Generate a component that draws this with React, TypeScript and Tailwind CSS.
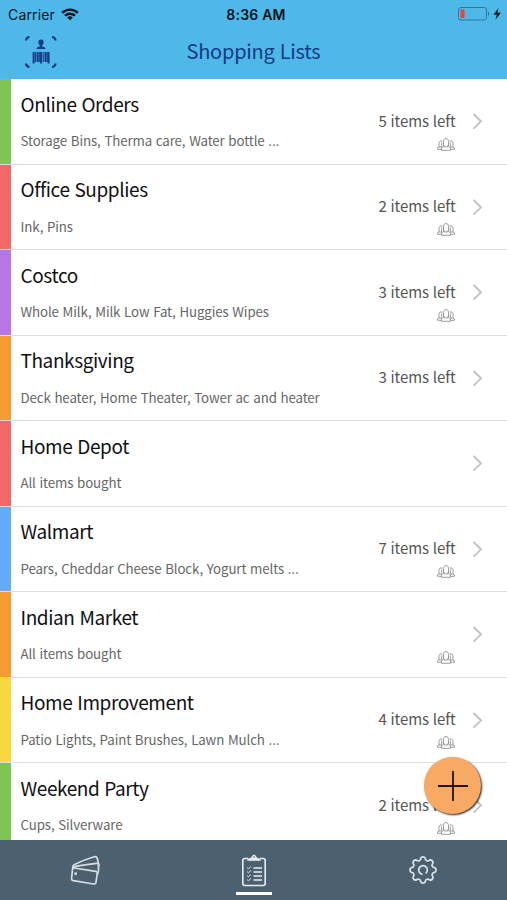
type ShoppingList = {
  name: string;
  summary: string;
  color: string;
  left?: number;
  shared?: boolean;
};

const lists: ShoppingList[] = [
  { name: "Online Orders", summary: "Storage Bins, Therma care, Water bottle ...", color: "bg-[#7dc653]", left: 5, shared: true },
  { name: "Office Supplies", summary: "Ink, Pins", color: "bg-[#ef6a67]", left: 2, shared: true },
  { name: "Costco", summary: "Whole Milk, Milk Low Fat, Huggies Wipes", color: "bg-[#b775e8]", left: 3, shared: true },
  { name: "Thanksgiving", summary: "Deck heater, Home Theater, Tower ac and heater", color: "bg-[#f59b31]", left: 3 },
  { name: "Home Depot", summary: "All items bought", color: "bg-[#ef6a67]" },
  { name: "Walmart", summary: "Pears, Cheddar Cheese Block, Yogurt melts ...", color: "bg-[#63aaf8]", left: 7, shared: true },
  { name: "Indian Market", summary: "All items bought", color: "bg-[#f59b31]", shared: true },
  { name: "Home Improvement", summary: "Patio Lights, Paint Brushes, Lawn Mulch ...", color: "bg-[#f6d93c]", left: 4, shared: true },
  { name: "Weekend Party", summary: "Cups, Silverware", color: "bg-[#7dc653]", left: 2, shared: true },
];

function WifiIcon() {
  return (
    <svg width="18" height="13" viewBox="0 0 18 13" fill="none" stroke="#06131b" strokeWidth="2.3">
      <path d="M1.2 4.9a11 11 0 0 1 15.6 0M4 7.8a7.1 7.1 0 0 1 10 0" />
      <path d="M9 12.3 6.2 9.5a4 4 0 0 1 5.6 0Z" fill="#06131b" stroke="none" />
    </svg>
  );
}

function BatteryIcon() {
  return (
    <svg width="44" height="14" viewBox="0 0 44 14" fill="none">
      <rect x="0.5" y="0.5" width="28" height="12.5" rx="2.5" stroke="#2d7796" />
      <rect x="2.5" y="2.5" width="4" height="8.5" rx="0.5" fill="#ee3f3c" />
      <path d="M30 4.5V9c1.5-.6 1.5-3.9 0-4.5Z" fill="#2d7796" />
      <path d="M40.5 1 35.5 7.8h3.3l-1.4 5 5.5-7h-3.5Z" fill="#06131b" />
    </svg>
  );
}

function ScanIcon() {
  return (
    <svg width="32" height="32" viewBox="0 0 32 32" fill="none" stroke="#143a85">
      <path d="M1 4.5C1.2 2.5 2.5 1.2 4.5 1M27 1c2 .2 3.3 1.5 3.5 3.5M30.5 27.5c-.2 2-1.5 3.300-3.500 3.500M4.500 31c-2-.2-3.300-1.500-3.500-3.500" strokeWidth="2.2" />
      <path d="M16 3.500c-2 0-2.800 1.300-2.600 3 .1 1.300.6 2.200 1.400 2.800v1.200c-1.800.5-3.300.8-3.300 2.500h9c0-1.700-1.500-2-3.300-2.500V9.300c.8-.6 1.300-1.500 1.400-2.800.2-1.700-.6-3-2.600-3Z" fill="#143a85" stroke="none" />
      <path d="M8.600 16v11.500M12.600 16v10M16 16v11.500M20.500 16v10M23.600 16v11.500" strokeWidth="1.9" />
      <path d="M10.500 16v10M14.300 16v10M18.200 16v10M22.200 16v10" strokeWidth="1.1" />
    </svg>
  );
}

function PeopleIcon() {
  return (
    <svg width="18" height="13" viewBox="0 0 18 13" fill="none" stroke="#919191" strokeWidth="0.9">
      <path d="M6.500 8.500V3.500C6.500 1.600 7.500.6 9 .6s2.500 1 2.500 2.900v5L13.500 10v2.300h-9V10Z" />
      <path d="M5.500 3.200C3.500 2.300 2 3.400 2 5.200V9L.5 9.800v1.500h4M12.500 3.200c2-.9 3.500.2 3.500 2V9l1.500.8v1.500h-4M4.700 4.500v5M13.300 4.500v5M2 9h2.500M13.500 9H16M7.500 7.500v1.500h3V7.500" />
    </svg>
  );
}

function CardsIcon() {
  return (
    <svg width="31" height="31" viewBox="0 0 31 31" fill="none" stroke="#d5dee5" strokeWidth="1.7" strokeLinejoin="round">
      <path d="M5.200 13 26.700 16.300a1.800 1.800 0 0 1 1.600 2L27 27.300a2 2 0 0 1-2.300 1.700L4.300 25.700a2 2 0 0 1-1.700-2.300L3.500 14.300a1.600 1.600 0 0 1 1.700-1.300Z" />
      <path d="M3.700 14V12c0-1.300.6-2 1.800-2.600C12 6.300 18 3.900 25.300 1.800c1.600-.4 2.500.2 2.900 1.500L29.700 9.500l-.5 2" />
      <path d="M4.300 13c.3-1 .9-1.500 2-1.700C14 10.200 20 9.300 27.500 8.300c1.400-.1 2.200.6 2.200 1.800L29.300 17l-1.200 3" />
      <circle cx="6.6" cy="18.8" r="0.6" />
    </svg>
  );
}

function ClipboardIcon() {
  return (
    <svg width="26" height="33" viewBox="0 0 26 33" fill="none" stroke="#e8eff4" strokeWidth="1.6">
      <path d="M7 4.500H3.800a2 2 0 0 0-2 2v23a2 2 0 0 0 2 2h18.400a2 2 0 0 0 2-2v-23a2 2 0 0 0-2-2H19" />
      <path d="M6.500 6.500c0-1 .8-1.800 2.500-2.200 1.200-.3 1.600-.6 2-1.500C11.500 1.500 12 1 13 1s1.500.5 2 1.800c.4.900.8 1.200 2 1.500 1.700.4 2.500 1.200 2.500 2.200Z" fill="#e8eff4" strokeWidth="0.6" />
      <circle cx="13" cy="3" r="0.8" fill="#4d6070" stroke="none" />
      <path d="M12.500 14H21M12.500 18H21M12.500 22H21M12.500 26H21" strokeWidth="1.7" />
      <path d="m6 13.500 1.400 1.300L10 12.500M6 17.500l1.400 1.300 2.600-2.300M6 21.500l1.400 1.300 2.600-2.300M6 25.500l1.400 1.300 2.600-2.300" strokeWidth="0.9" />
    </svg>
  );
}

function GearIcon() {
  return (
    <svg width="30" height="30" viewBox="0 0 30 30" fill="none" stroke="#d5dee5" strokeWidth="1.8" strokeLinejoin="round">
      <path d="M26.570 12.700A2.500 2.500 0 0 1 26.570 17.300A2.500 2.500 0 0 0 24.810 21.560A2.500 2.500 0 0 1 21.560 24.810A2.500 2.500 0 0 0 17.300 26.570A2.500 2.500 0 0 1 12.700 26.570A2.500 2.500 0 0 0 8.440 24.810A2.500 2.500 0 0 1 5.190 21.560A2.500 2.500 0 0 0 3.430 17.300A2.500 2.500 0 0 1 3.430 12.700A2.500 2.500 0 0 0 5.190 8.440A2.500 2.500 0 0 1 8.440 5.190A2.500 2.500 0 0 0 12.700 3.430A2.500 2.500 0 0 1 17.300 3.430A2.500 2.500 0 0 0 21.560 5.190A2.500 2.500 0 0 1 24.810 8.440A2.500 2.500 0 0 0 26.570 12.700Z" />
      <path d="M14.500 19.300a4.300 4.300 0 1 1 3.200-.9" />
    </svg>
  );
}

function ListRow({ list }: { list: ShoppingList }) {
  return (
    <li className="flex h-[85.5px] shrink-0 border-b border-[#dedede]">
      <div className={`w-[11px] shrink-0 ${list.color}`} />
      <div className="min-w-0 flex-1 pl-[9.5px]">
        <h2 className="mt-[9.5px] text-[19px] leading-[30px] tracking-[-0.4px] whitespace-nowrap text-[#111111] [word-spacing:1px]">{list.name}</h2>
        <p className="mt-[12.5px] text-[13.3px] leading-[20px] tracking-[-0.12px] whitespace-nowrap text-[#666666] [word-spacing:0.9px]">{list.summary}</p>
      </div>
      <div className="flex w-[100px] shrink-0 flex-col items-end pt-[30.5px] text-[15px] leading-[22px] whitespace-nowrap text-[#555555]">
        <span className="h-[22px] tracking-[-0.1px] [word-spacing:0.7px]">{list.left && `${list.left} items left`}</span>
        <span className="mt-[6px] mr-[1px]">{list.shared && <PeopleIcon />}</span>
      </div>
      <svg className="mt-[34px] mr-[23.5px] ml-[16px] shrink-0" width="12" height="17" viewBox="0 0 12 17" fill="none" stroke="#c0c0c0" strokeWidth="1.8">
        <path d="m1.500 1 7.500 7.300-7.500 7.300" />
      </svg>
    </li>
  );
}

export default function App() {
  return (
    <div className="relative flex h-[900px] w-[507px] flex-col overflow-hidden bg-white font-['Noto_Sans_CJK_SC',sans-serif]">
      <header className="h-[79px] shrink-0 bg-[#4eb9e9]">
        <div className="grid h-[28px] grid-cols-3 items-center pr-[5px] pl-[8px] font-['Inter',sans-serif] text-[14px] text-[#06131b]">
          <div className="flex items-center gap-[6px]">
            <span className="tracking-[0.15px]">Carrier</span>
            <WifiIcon />
          </div>
          <div className="pl-[2px] text-center font-semibold tracking-[0.2px]">8:36 AM</div>
          <div className="flex justify-end">
            <BatteryIcon />
          </div>
        </div>
        <div className="grid h-[48px] grid-cols-[1fr_auto_1fr] items-center">
          <div className="pl-[24.5px]">
            <ScanIcon />
          </div>
          <h1 className="pb-[3px] text-[20px] leading-[28px] tracking-[-0.25px] text-[#143a85] [word-spacing:1px]">Shopping Lists</h1>
        </div>
      </header>
      <ul className="min-h-0 flex-1 overflow-hidden">
        {lists.map((list) => (
          <ListRow key={list.name} list={list} />
        ))}
      </ul>
      <nav className="grid h-[60px] shrink-0 grid-cols-3 bg-[#4d6070]">
        <button className="flex justify-center pt-[15px]">
          <CardsIcon />
        </button>
        <button className="flex flex-col items-center pt-[14px]">
          <ClipboardIcon />
          <span className="mt-[5px] h-[2.5px] w-[36px] bg-white" />
        </button>
        <button className="flex justify-center pt-[15px]">
          <GearIcon />
        </button>
      </nav>
      <button className="absolute top-[757px] left-[424px] flex size-[57px] items-center justify-center rounded-full bg-[#f8aa65] shadow-[1px_1px_2px_#222]">
        <svg width="30" height="30" viewBox="0 0 30 30" stroke="#1c140d" strokeWidth="1.8">
          <path d="M15 0v30M0 15h30" />
        </svg>
      </button>
    </div>
  );
}
